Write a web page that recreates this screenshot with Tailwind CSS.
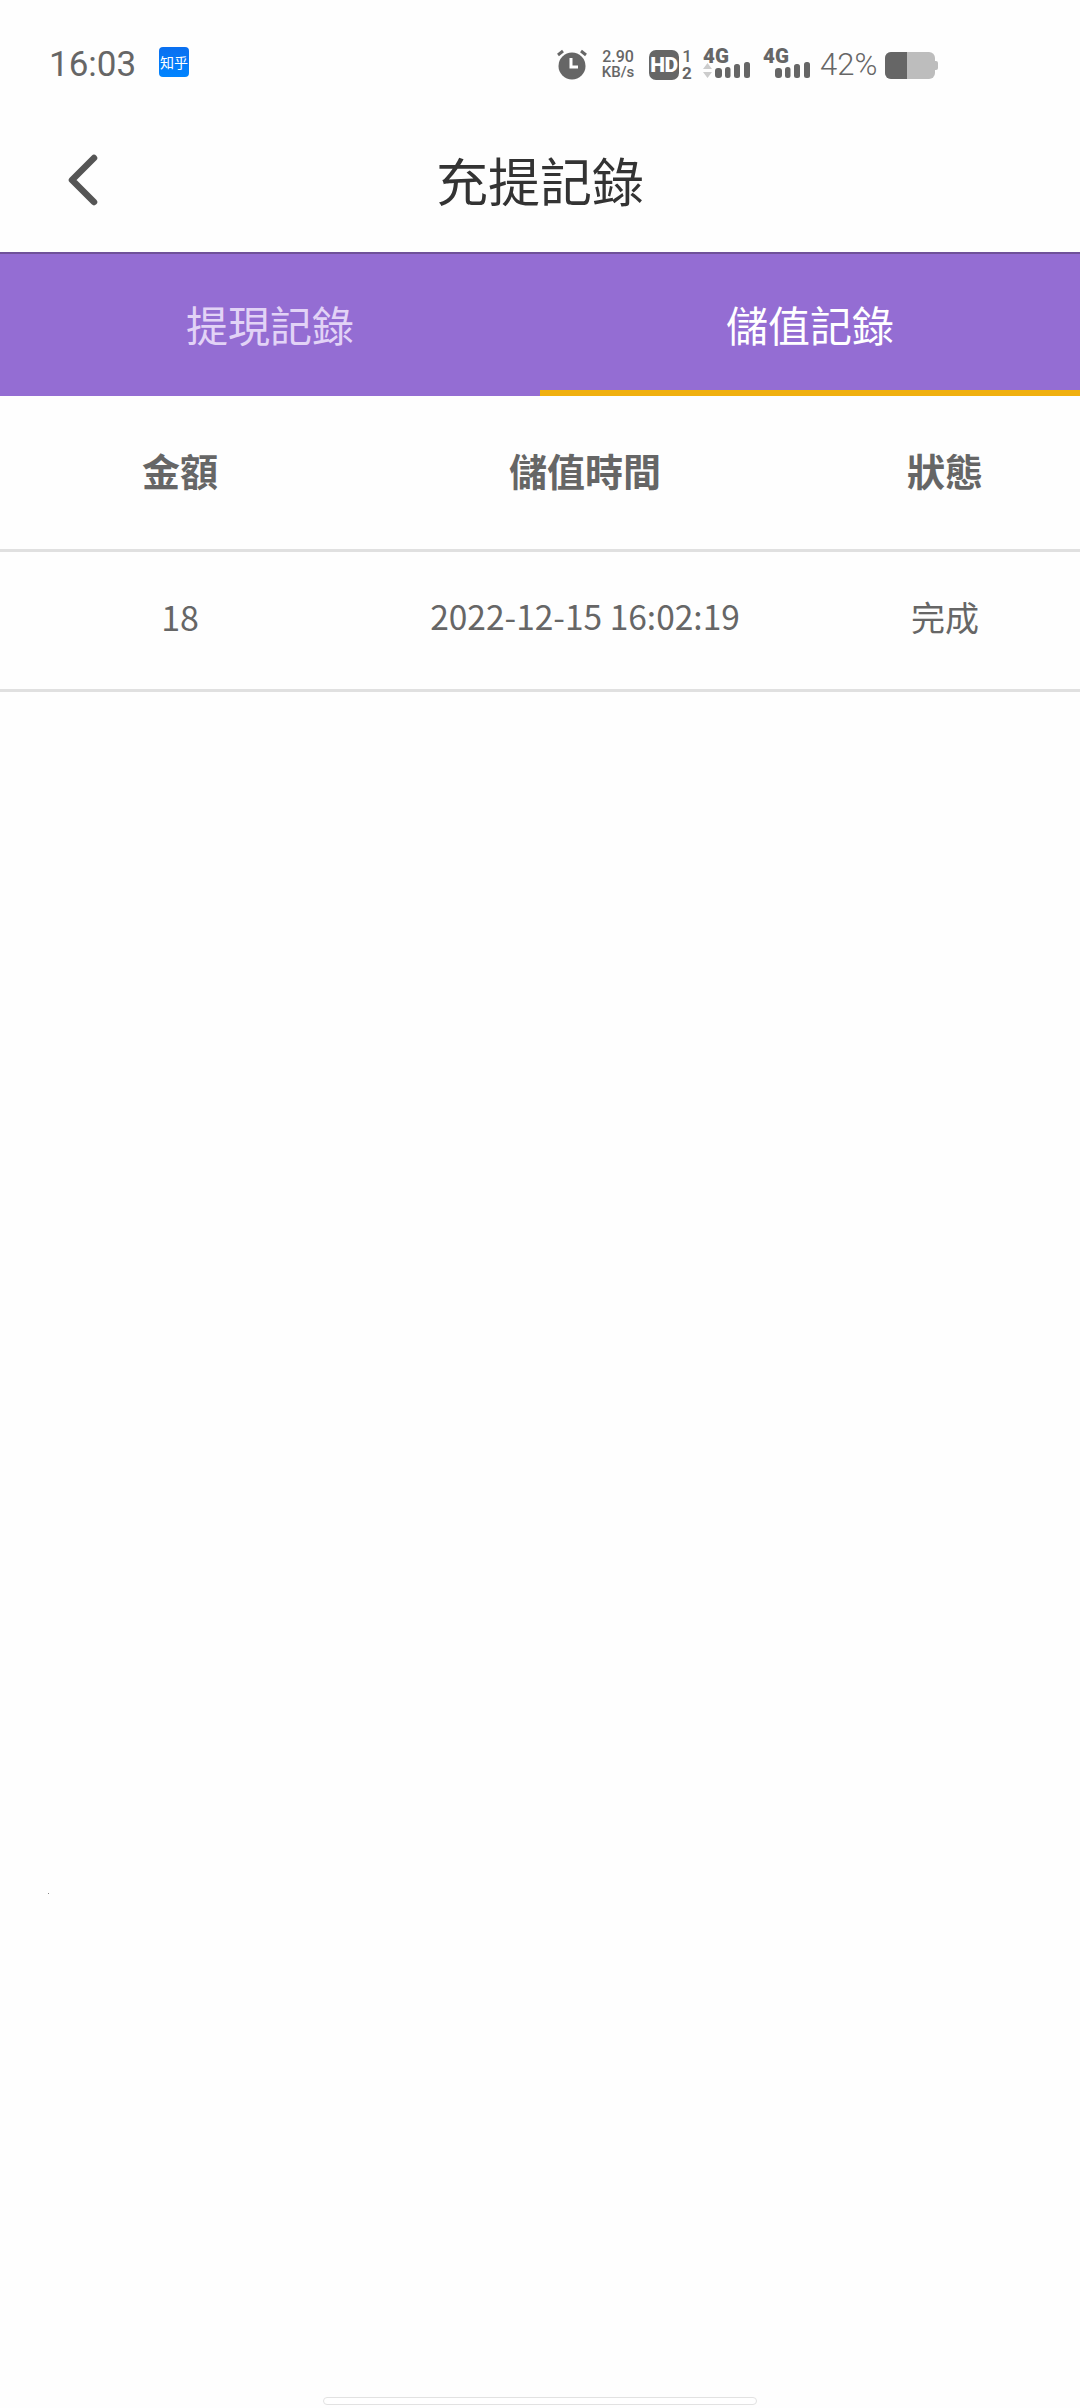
<!DOCTYPE html>
<html lang="zh-Hant">
<head>
  <meta charset="UTF-8" />
  <meta name="viewport" content="width=device-width, initial-scale=1.0" />
  <title>充提記錄</title>
  <script src="https://cdn.jsdelivr.net/npm/@tailwindcss/browser@4"></script>
</head>
<body class="bg-[#fefefe] font-['Noto_Sans_CJK_TC','Noto_Sans',sans-serif] text-[#666]">
  <div class="relative w-[1080px] h-[2408px] overflow-hidden">

    <!-- status bar -->
    <div class="h-[128px] flex items-center pl-[49px] font-['Roboto',sans-serif]">
      <span class="w-[110px] text-[35px] leading-none font-normal">16:03</span>
      <div class="w-[30px] h-[30px] -mt-[4px] rounded-[4px] bg-gradient-to-b from-[#0a6ff0] to-[#0084ff] flex items-center justify-center text-white text-[14px] leading-none font-['Noto_Sans_CJK_SC',sans-serif] whitespace-nowrap">知乎</div>

      <div class="ml-[368px] w-[30px] h-[32px]">
        <svg viewBox="0 0 30 32" class="w-[30px] h-[32px]">
          <circle cx="15" cy="18" r="13.5" fill="#666" />
          <path d="M14 10v9h7" fill="none" stroke="#fff" stroke-width="3" />
          <path d="M1 7l5-4M29 7l-5-4" fill="none" stroke="#666" stroke-width="3" />
        </svg>
      </div>

      <div class="ml-[13px] w-[36px] flex flex-col items-center text-[16px] leading-[17px] font-medium">
        <span>2.90</span>
        <span class="text-[15px] leading-[15px]">KB/s</span>
      </div>

      <div class="ml-[13px] w-[30px] h-[30px] mt-[2px] rounded-[7px] bg-[#666] text-white text-[21px] font-black leading-[30px] text-center tracking-[-0.5px]">HD</div>
      <div class="ml-[2px] w-[12px] flex flex-col items-center text-[17px] leading-[17px] font-bold mt-[2px]">
        <span class="font-medium">1</span>
        <span>2</span>
      </div>

      <svg viewBox="0 0 50 32" class="ml-[10px] w-[50px] h-[32px] overflow-visible">
        <text x="0" y="15" font-family="Roboto" font-size="20.5" font-weight="900" fill="#666">4G</text>
        <path d="M0 21l4.5-6 4.5 6zM0 24h9l-4.5 6z" fill="#ccc" />
        <rect x="12" y="20" width="7" height="10" rx="3" fill="#666" />
        <rect x="22" y="19" width="5.5" height="11" rx="2.5" fill="#666" />
        <rect x="31" y="16" width="6" height="14" rx="2.5" fill="#666" />
        <rect x="41" y="14" width="6" height="16" rx="2.5" fill="#666" />
      </svg>

      <svg viewBox="0 0 50 32" class="ml-[10px] w-[50px] h-[32px] overflow-visible">
        <text x="0" y="15" font-family="Roboto" font-size="20.5" font-weight="900" fill="#666">4G</text>
        <rect x="12" y="20" width="7" height="10" rx="3" fill="#666" />
        <rect x="22" y="19" width="5.5" height="11" rx="2.5" fill="#666" />
        <rect x="31" y="16" width="6" height="14" rx="2.5" fill="#666" />
        <rect x="41" y="14" width="6" height="16" rx="2.5" fill="#666" />
      </svg>

      <span class="ml-[7px] w-[56px] text-[31px] leading-none font-light whitespace-nowrap">42%</span>

      <!-- battery -->
      <div class="ml-[9px] flex items-center mt-[2px]">
        <div class="w-[50px] h-[27px] rounded-[6px] bg-[#bdbdbd] overflow-hidden">
          <div class="w-[22px] h-full bg-[#666]"></div>
        </div>
        <div class="w-[3px] h-[9px] rounded-r-[2px] bg-[#bdbdbd]"></div>
      </div>
    </div>

    <!-- nav -->
    <div class="h-[124px] pb-[20px] grid grid-cols-[1fr_auto_1fr] items-center">
      <svg viewBox="0 0 36 58" class="ml-[64px] w-[36px] h-[58px]">
        <path d="M30 7L8 29l22 22" fill="none" stroke="#555" stroke-width="6.5" stroke-linecap="round" stroke-linejoin="round" />
      </svg>
      <h1 class="text-[52px] leading-none text-[#333] font-normal">充提記錄</h1>
      <div></div>
    </div>

    <!-- tabs -->
    <div class="h-[144px] bg-[#946dd3] border-t-2 border-[#6f5199] grid grid-cols-2 text-[42px]">
      <div class="flex items-center justify-center pt-[2px] pb-[6px] text-[#e2d3f6]">提現記錄</div>
      <div class="flex items-center justify-center pt-[2px] text-white border-b-[6px] border-[#f0b00f]">儲值記錄</div>
    </div>

    <!-- table -->
    <div class="h-[156px] pb-[6px] border-b-[3px] border-[#e0e0e0] grid grid-cols-[360px_450px_270px] items-center text-center text-[38px] font-bold">
      <div>金額</div>
      <div>儲值時間</div>
      <div>狀態</div>
    </div>
    <div class="h-[140px] pb-[8px] border-b-[3px] border-[#e0e0e0] grid grid-cols-[360px_450px_270px] items-center text-center text-[34px]">
      <div>18</div>
      <div class="text-[33.5px]">2022-12-15 16:02:19</div>
      <div>完成</div>
    </div>

    <div class="absolute left-[48px] top-[1893px] w-[1px] h-[1px] bg-[#888]"></div>

    <!-- home bar -->
    <div class="absolute left-[323px] top-[2397px] w-[434px] h-[8px] rounded-full bg-white border border-[#e2e2e2]"></div>
  </div>
</body>
</html>
